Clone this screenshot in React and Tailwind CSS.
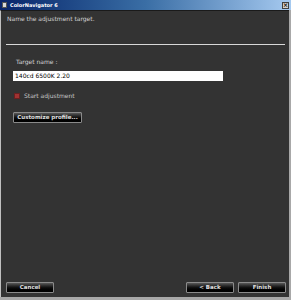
import React from 'react';

const font = { fontFamily: '"DejaVu Sans", Verdana, sans-serif' };

const DarkButton = ({ children, className = '' }) => (
  <button
    className={`h-[11px] flex items-center justify-center rounded-[1px] border border-[#8a8a8a] bg-gradient-to-b from-[#5a5a5a] via-[#111] to-[#000] text-[5.5px] font-bold leading-none text-[#e0e0e0] ${className}`}
  >
    {children}
  </button>
);

const App = () => {
  return (
    <div className="w-[291px] h-[300px] flex flex-col bg-[#a8a8a8] overflow-hidden" style={font}>
      {/* title bar */}
      <div className="h-[10px] flex items-center bg-gradient-to-r from-[#0a246a] via-[#3a6ea5] to-[#a6caf0] pl-[2px] pr-[2px]">
        <div className="w-[5px] h-[6px] bg-[#d8d8d8] border border-[#555] mr-[3px]" />
        <span className="text-[5px] font-bold leading-none text-white">ColorNavigator 6</span>
        <div className="ml-auto w-[7px] h-[7px] bg-[#d4d0c8] border border-[#404040] flex items-center justify-center">
          <span className="text-[6px] font-bold leading-none text-black">×</span>
        </div>
      </div>

      {/* client area */}
      <div className="flex-1 flex flex-col bg-[#333333] border-t border-[#1a1a1a] border-l border-l-[#c0c0c0] mr-[2px] mb-[3px]">
        <div className="pl-[6px] pt-[5px] text-[6px] leading-none text-[#d4d4d4]">Name the adjustment target.</div>

        <div className="mt-[22px] ml-[5px] mr-[4px] h-px bg-[#d8d8d8]" />

        <div className="pl-[12px] pt-[14px] flex flex-col">
          <span className="text-[6px] leading-none text-[#d4d4d4] pl-[3px]">Target name :</span>
          <div className="mt-[6px] w-[210px] h-[10px] bg-white flex items-center pl-[2px]">
            <span className="text-[6px] leading-none text-black">140cd 6500K 2.20</span>
          </div>

          <div className="mt-[12px] flex items-center gap-[4px] pl-[1px]">
            <div className="w-[6px] h-[6px] bg-[#a03232] border border-[#6a2020]" />
            <span className="text-[6px] leading-none text-[#c8c8c8]">Start adjustment</span>
          </div>

          <DarkButton className="mt-[13px] w-[69px]">Customize profile...</DarkButton>
        </div>

        <div className="mt-auto flex items-center pl-[5px] pr-[3px] pb-[4px]">
          <DarkButton className="w-[48px]">Cancel</DarkButton>
          <div className="ml-auto flex gap-[4px]">
            <DarkButton className="w-[48px]">&lt; Back</DarkButton>
            <DarkButton className="w-[48px]">Finish</DarkButton>
          </div>
        </div>
      </div>
    </div>
  );
};

export default App;
